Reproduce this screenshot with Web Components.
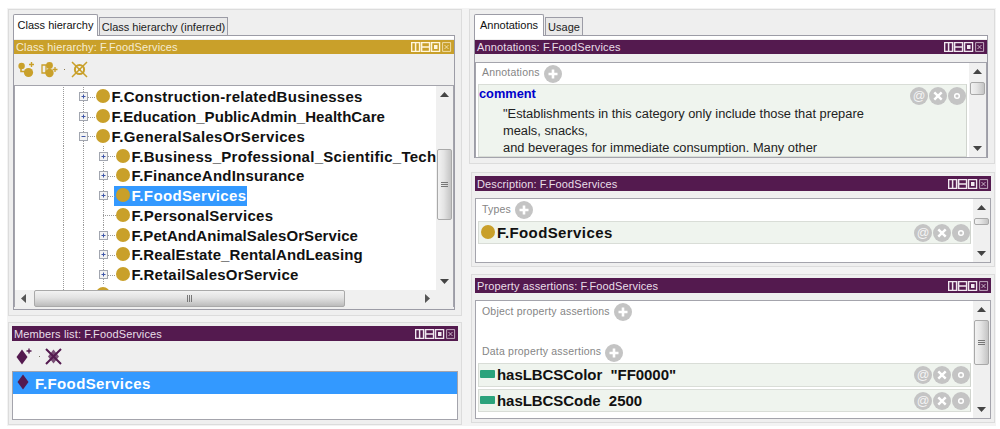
<!DOCTYPE html>
<html lang="en"><head><meta charset="utf-8"><title>Protege</title>
<style>
html,body{margin:0;background:#fff;font-family:"Liberation Sans",Arial,sans-serif}
svg{display:block}
</style></head><body>
<pp-app>
  <pp-column slot="left" style="width:454px">
    <pp-panel style="height:307px" pad="4px 6px 5px 4px">
      <pp-tabs a="Class hierarchy" aw="85" b="Class hierarchy (inferred)" bw="129">
        <pp-title color="#c9a02a" text="#f6ecd2">Class hierarchy: F.FoodServices</pp-title>
        <pp-toolbar h="31">
          <svg width="17" height="17" viewBox="0 0 17 17" style="margin-left:3px"><path d="M3 5v5.500h6" stroke="#c9a02a" stroke-width="1.600" fill="none"/><circle cx="3.600" cy="5" r="3.200" fill="#c9a02a"/><circle cx="10.500" cy="11.500" r="4.600" fill="#c9a02a"/><path d="M13.500 1v5M11 3.500h5" stroke="#c9a02a" stroke-width="1.400"/></svg>
          <svg width="17" height="17" viewBox="0 0 17 17" style="margin-left:6px"><path d="M1 4h4v8H1zM5 4h2M5 12h2" stroke="#c9a02a" stroke-width="1.300" fill="none"/><circle cx="8.500" cy="4.500" r="3.400" fill="#c9a02a"/><circle cx="8.500" cy="12" r="4.200" fill="#c9a02a"/><path d="M14 6v5M11.500 8.500h5" stroke="#c9a02a" stroke-width="1.300"/></svg>
          <i></i>
          <svg width="17" height="17" viewBox="0 0 17 17" style="margin-left:6px"><path d="M1 1l15 15M16 1L1 16" stroke="#c9a02a" stroke-width="1.500"/><circle cx="8.500" cy="8.500" r="4.600" fill="none" stroke="#c9a02a" stroke-width="2"/><circle cx="8.500" cy="8.500" r="1.400" fill="#c9a02a"/></svg>
        </pp-toolbar>
        <pp-tree>
          <pp-node level="1" exp="plus" style="letter-spacing:.27px">F.Construction-relatedBusinesses</pp-node>
          <pp-node level="1" exp="plus" style="letter-spacing:.05px">F.Education_PublicAdmin_HealthCare</pp-node>
          <pp-node level="1" exp="minus" style="letter-spacing:.32px">F.GeneralSalesOrServices</pp-node>
          <pp-node level="2" exp="plus" style="letter-spacing:.28px">F.Business_Professional_Scientific_Technical</pp-node>
          <pp-node level="2" exp="plus" style="letter-spacing:.22px">F.FinanceAndInsurance</pp-node>
          <pp-node level="2" exp="plus" selected style="letter-spacing:.35px">F.FoodServices</pp-node>
          <pp-node level="2" style="letter-spacing:.28px">F.PersonalServices</pp-node>
          <pp-node level="2" exp="plus" style="letter-spacing:.08px">F.PetAndAnimalSalesOrService</pp-node>
          <pp-node level="2" exp="plus" style="letter-spacing:.1px">F.RealEstate_RentalAndLeasing</pp-node>
          <pp-node level="2" exp="plus" last style="letter-spacing:.2px">F.RetailSalesOrService</pp-node>
          <pp-node level="1" exp="plus"></pp-node>
        </pp-tree>
      </pp-tabs>
    </pp-panel>
    <pp-panel style="height:103px;margin-top:6px" pad="3px 3px 4px 3px">
      <pp-title color="#541a4f" text="#e9dfe8" plain>Members list: F.FoodServices</pp-title>
      <pp-toolbar h="30">
        <svg width="17" height="17" viewBox="0 0 17 17" style="margin-left:3px"><path d="M6 1.500L11.500 9 6 16.500 .5 9z" fill="#541a4f"/><path d="M13 .5v5M10.500 3h5" stroke="#541a4f" stroke-width="1.400"/></svg>
        <i style="background:#776"></i>
        <svg width="17" height="17" viewBox="0 0 17 17" style="margin-left:5px"><path d="M8.500 1.500L14 8.500 8.500 15.500 3 8.500z" fill="#7a4f76"/><path d="M1 1l15 15M16 1L1 16" stroke="#541a4f" stroke-width="2"/></svg>
      </pp-toolbar>
      <pp-member>F.FoodServices</pp-member>
    </pp-panel>
  </pp-column>

  <pp-column slot="right" style="width:526px">
    <pp-panel style="height:155px" pad="4px 6px 5px 4px">
      <pp-tabs a="Annotations" aw="70" b="Usage" bw="38">
        <pp-title color="#541a4f" text="#e9dfe8">Annotations: F.FoodServices</pp-title>
        <pp-box style="margin-top:8px;height:96px" before="2" size="13">
          <pp-head h="21">Annotations</pp-head>
          <pp-card style="height:73px">
            <span slot="lead" style="color:#0000cc;font:bold 12.800px 'Liberation Sans',sans-serif;letter-spacing:0;margin:-5px 0 0 0">comment</span>
            <pp-para>
              <span>"Establishments in this category only include those that prepare</span>
              <span>meals, snacks,</span>
              <span>and beverages for immediate consumption. Many other</span>
            </pp-para>
          </pp-card>
        </pp-box>
      </pp-tabs>
    </pp-panel>
    <pp-panel style="height:95px;margin:8px 0 0 2px" pad="3px 3px 3px 3px">
      <pp-title color="#541a4f" text="#e9dfe8" plain>Description: F.FoodServices</pp-title>
      <pp-box style="margin-top:7px;height:65px" before="2" size="7">
        <pp-head h="22">Types</pp-head>
        <pp-card style="height:23px">
          <pp-entity slot="lead" kind="class" style="letter-spacing:.4px">F.FoodServices</pp-entity>
        </pp-card>
      </pp-box>
    </pp-panel>
    <pp-panel style="height:149px;margin:7px 0 0 2px" pad="3px 3px 3px 3px">
      <pp-title color="#541a4f" text="#e9dfe8" plain>Property assertions: F.FoodServices</pp-title>
      <pp-box style="margin-top:7px;height:119px" before="2" size="45">
        <pp-head h="22">Object property assertions</pp-head>
        <pp-head h="21" style="margin-top:19px">Data property assertions</pp-head>
        <pp-card style="height:24px">
          <pp-entity slot="lead" kind="data">hasLBCSColor  "FF0000"</pp-entity>
        </pp-card>
        <pp-card style="height:23px;margin-top:2px">
          <pp-entity slot="lead" kind="data">hasLBCSCode  2500</pp-entity>
        </pp-card>
      </pp-box>
    </pp-panel>
  </pp-column>
</pp-app>
<script>
const FONT = `"Liberation Sans",Arial,sans-serif`;
function def(name, css, html, init){
  customElements.define(name, class extends HTMLElement{
    constructor(){ super(); this.attachShadow({mode:'open'}); }
    connectedCallback(){
      if(this._done) return; this._done = true;
      const attrs = n => this.getAttribute(n);
      this.shadowRoot.innerHTML = `<style>svg{display:block}${css}</style>` + (typeof html === 'function' ? html(attrs, this) : html);
      if(init) init(this, attrs);
    }
  });
}
const upDown = d => `<svg width="9" height="5" viewBox="0 0 9 5"><path d="${d}" fill="#444"/></svg>`;
const leftRight = d => `<svg width="5" height="9" viewBox="0 0 5 9"><path d="${d}" fill="#555"/></svg>`;

def('pp-app', `:host{display:flex;gap:7px;box-sizing:border-box;margin:8px 0 0 7px;padding:1px;width:989px;height:418px;background:#f3f3f3;font-family:${FONT}}`, `<slot name="left"></slot><slot name="right"></slot>`);
def('pp-column', `:host{display:block;flex:none}`, `<slot></slot>`);
def('pp-panel', `:host{display:block;box-sizing:border-box;background:#efefef;border:1px solid #dcdcdc}
  div{box-sizing:border-box;height:100%;display:flex;flex-direction:column}`,
  a=>`<div style="padding:${a('pad')}"><slot></slot></div>`);

def('pp-tabs', `:host{display:flex;flex-direction:column;flex:1;min-height:0}
  .strip{display:flex;align-items:flex-end;height:22px;margin-bottom:-1px;position:relative;z-index:1}
  .t{box-sizing:border-box;border:1px solid #9c9ca6;border-bottom:0;font-size:11px;color:#111;white-space:nowrap;text-align:center}
  .on{height:22px;background:#fff;border-radius:2px 2px 0 0;line-height:21px}
  .off{height:18px;margin:0 0 1px 1px;background:#e9e9e9;line-height:18px;color:#222}
  .frame{flex:1;min-height:0;display:flex;flex-direction:column;border:1px solid #9c9ca6;padding-top:4px;background:linear-gradient(#fff 3px,#efefef 3px)}`,
  a=>`<div class="strip"><div class="t on" style="width:${a('aw')}px">${a('a')}</div><div class="t off" style="width:${a('bw')}px">${a('b')}</div></div><div class="frame"><slot></slot></div>`);

const ctl = c => `<svg width="41" height="10" viewBox="0 0 41 10" fill="none" stroke="${c}" stroke-width="1.300">
  <path d="M.6.6h8v8.800h-8zM4.600.6v8.800" stroke-width="1.500"/><path d="M10.600.6h8v8.800h-8zM10.600 5h8" stroke-width="1.500"/><path d="M20.600.6h8v8.800h-8z"/><path d="M23 3h3.500v4H23z" fill="${c}" stroke="none"/>
  <path d="M31.600.6h8v8.800h-8zM33.500 3l4 4M37.500 3l-4 4" opacity=".7" stroke-width="1"/></svg>`;
def('pp-title', `:host{display:flex;flex:none;align-items:center;height:14px;padding:0 2px 0 2px;font-size:11px;letter-spacing:.13px;white-space:nowrap}
  :host([plain]){height:15px}
  span{flex:1}`,
  a=>`<span style="color:${a('text')}"><slot></slot></span>${ctl(a('text')==='#f6ecd2'?'#fff6de':'#f1e9f0')}`,
  (el,a)=>{el.style.background=a('color')});

def('pp-toolbar', `:host{display:flex;flex:none;align-items:center;padding-left:1px}
  ::slotted(i){width:1px;height:1px;background:#8a7a50;margin-left:6px}`, `<slot></slot>`,
  (el,a)=>{el.style.height=a('h')+'px'});

def('pp-scrollbar', `:host{display:flex;flex:none;background:#f0f0f0}
  :host([orient=v]){flex-direction:column;width:17px}
  :host([orient=h]){height:17px;flex:1;min-width:0}
  .a{flex:none;display:flex;align-items:center;justify-content:center;width:17px;height:17px}
  .g{flex:none}
  .f{flex:1;min-width:0;min-height:0}
  .th{flex:none;box-sizing:border-box;border:1px solid #a9a9a9;border-radius:2px;display:flex;align-items:center;justify-content:center;gap:1px}
  :host([orient=v]) .th{width:15px;margin-left:1px;flex-direction:column;background:linear-gradient(90deg,#f2f2f2,#e4e4e4 45%,#c4c4c4)}
  :host([orient=h]) .th{background:linear-gradient(#f2f2f2,#e2e2e2 45%,#bcbcbc);border-width:1px}
  .l{background:#777}
  :host([orient=v]) .l{width:7px;height:1px}
  :host([orient=h]) .l{width:1px;height:7px}`,
  a=>{
    const v=a('orient')==='v', b=a('before'), s=a('size');
    const dim=v?'height':'width';
    const grip=+s>20?'<b class="l"></b><b class="l"></b><b class="l"></b>':'';
    return `<div class="a">${v?upDown('M4.500 0L9 5H0z'):leftRight('M5 0v9L0 4.500z')}</div>
      <div class="g" style="${dim}:${b}px"></div><div class="th" style="${dim}:${s}px">${grip}</div><div class="f"></div>
      <div class="a">${v?upDown('M0 0h9L4.500 5z'):leftRight('M0 0v9l5-4.500z')}</div>`;
  });

def('pp-tree', `:host{display:block;flex:none;height:222px;box-sizing:border-box;border:1px solid #a4a4ac;background:#fff;position:relative}
  .top{display:flex;height:204px}
  .view{flex:1;min-width:0;overflow:hidden;padding:1px 0 0 0;box-sizing:border-box}
  .bot{display:flex;height:17px}
  .corner{width:17px;flex:none;background:#f0f0f0}`,
  `<div class="top"><div class="view"><slot></slot></div><pp-scrollbar orient="v" before="46" size="71"></pp-scrollbar></div>
   <div class="bot"><pp-scrollbar orient="h" before="2" size="311"></pp-scrollbar><div class="corner"></div></div>`);

const dotV = 'linear-gradient(#9a9a9a 50%,transparent 0)';
const plus = `<svg width="9" height="9" viewBox="0 0 9 9"><rect x=".5" y=".5" width="8" height="8" fill="#f3f3f3" stroke="#a2a6b0"/><path d="M2.500 4.500h4M4.500 2.500v4" stroke="#3f57a8"/></svg>`;
const minus = `<svg width="9" height="9" viewBox="0 0 9 9"><rect x=".5" y=".5" width="8" height="8" fill="#f3f3f3" stroke="#a2a6b0"/><path d="M2.500 4.500h4" stroke="#3f57a8"/></svg>`;
def('pp-node', `:host{display:flex;align-items:center;height:19.750px;padding-left:44px;white-space:nowrap;font:bold 15px ${FONT};letter-spacing:.2px;color:#111}
  .g{flex:none;align-self:stretch;width:20px;background:${dotV} 4px 0/1px 2px repeat-y}
  .n{flex:none;align-self:stretch;position:relative;display:flex;align-items:center;width:17px;background:${dotV} 4px 0/1px 2px repeat-y}
  :host([last]) .n{background-size:1px 2px;background:linear-gradient(${'#9a9a9a'} 50%,transparent 0) 4px 0/1px 2px repeat-y}
  .h{position:absolute;left:9px;right:0;top:50%;height:1px;background:repeating-linear-gradient(90deg,#9a9a9a 0 1px,transparent 1px 2px)}
  .e{width:9px;height:9px;flex:none;position:relative}
  .lab{display:flex;align-items:center;height:20px;padding-right:1px;gap:1.500px}
  .dot{width:14px;height:14px;border-radius:50%;background:#c9a02a;flex:none;margin-top:-1px}
  :host([selected]) .lab{background:#3399ff;color:#fff;margin-left:-2px;padding-left:2px}`,
  (a,el)=>{
    const lv=+a('level'), e=a('exp');
    const guides='<span class="g"></span>'.repeat(lv);
    const icon=e==='plus'?plus:e==='minus'?minus:'';
    const noExp=!e;
    return `${guides}<span class="n"><span class="h" ${noExp?'style="left:4px"':''}></span><span class="e">${icon}</span></span><span class="lab"><span class="dot"></span><span><slot></slot></span></span>`;
  });

def('pp-member', `:host{display:block;box-sizing:border-box;height:49px;border:1px solid #a4a4ac;background:#fff;flex:none}
  .r{display:flex;align-items:center;height:22px;background:#3399ff;color:#fff;font:bold 15px ${FONT};letter-spacing:.4px;padding-left:4px}
  svg{margin-right:6px;margin-top:-3px}`,
  `<div class="r"><svg width="12" height="16" viewBox="0 0 12 16"><path d="M6 .5L11.500 8 6 15.500 .5 8z" fill="#541a4f"/></svg><span><slot></slot></span></div>`);

def('pp-box', `:host{display:flex;flex:none;box-sizing:border-box;border:1px solid #a4a4ac;background:#fff}
  .c{flex:1;min-width:0;overflow:hidden;padding-left:2px;box-sizing:border-box;padding-right:2px}`,
  a=>`<div class="c"><slot></slot></div><pp-scrollbar orient="v" before="${a('before')}" size="${a('size')}"></pp-scrollbar>`);

const plusBtn = `<svg width="18" height="18" viewBox="0 0 18 18"><circle cx="9" cy="9" r="9" fill="#c4c4c4"/><path d="M9 4.500v9M4.500 9h9" stroke="#fff" stroke-width="2.600"/></svg>`;
def('pp-head', `:host{display:flex;align-items:center;gap:4px;padding-left:4px;color:#858585;font:10.500px ${FONT};letter-spacing:.2px;white-space:nowrap}
  span{margin-top:-3px}`,
  `<span><slot></slot></span>${plusBtn}`,
  (el,a)=>{el.style.height=a('h')+'px'});

const acts = `<svg width="18" height="18" viewBox="0 0 18 18"><circle cx="9" cy="9" r="9" fill="#c4c4c4"/><text x="9" y="13" text-anchor="middle" font-family="Liberation Sans" font-size="12.500" fill="#f4f4f4">@</text></svg>
<svg width="18" height="18" viewBox="0 0 18 18"><circle cx="9" cy="9" r="9" fill="#c4c4c4"/><path d="M5.300 5.300l7.400 7.400M12.700 5.300l-7.400 7.400" stroke="#fff" stroke-width="2.400"/></svg>
<svg width="18" height="18" viewBox="0 0 18 18"><circle cx="9" cy="9" r="9" fill="#c4c4c4"/><circle cx="9" cy="9" r="2.300" fill="none" stroke="#fff" stroke-width="1.500"/></svg>`;
def('pp-card', `:host{display:block;box-sizing:border-box;background:#eff4ee;border:1px solid #d9ddd7;border-right-color:#d0d4ce;overflow:hidden}
  .top{display:flex;align-items:center;height:19px;padding:1px 0 0 0}
  .a{display:flex;gap:1px;margin-left:auto}
  .lead{flex:1;min-width:0;display:flex;align-items:center}`,
  `<div class="top"><div class="lead"><slot name="lead"></slot></div><div class="a">${acts}</div></div><slot></slot>`);

def('pp-para', `:host{display:flex;flex-direction:column;padding:0 0 0 24px}
  ::slotted(span){display:block;height:17px;font:12.850px/17px ${FONT};color:#222;white-space:nowrap}`, `<slot></slot>`);

def('pp-entity', `:host{display:flex;align-items:center;gap:2px;font:bold 15px ${FONT};letter-spacing:-.05px;color:#111;white-space:pre;padding-left:1px}
  .class{width:14px;height:14px;border-radius:50%;background:#c9a02a;flex:none;margin-left:1px}
  .data{width:15px;height:8px;border-radius:1px;background:#2ba37c;flex:none;margin-top:-2px}
  .class{margin-top:-1px}`,
  a=>`<span class="${a('kind')}"></span><span><slot></slot></span>`);
</script>
</body></html>
